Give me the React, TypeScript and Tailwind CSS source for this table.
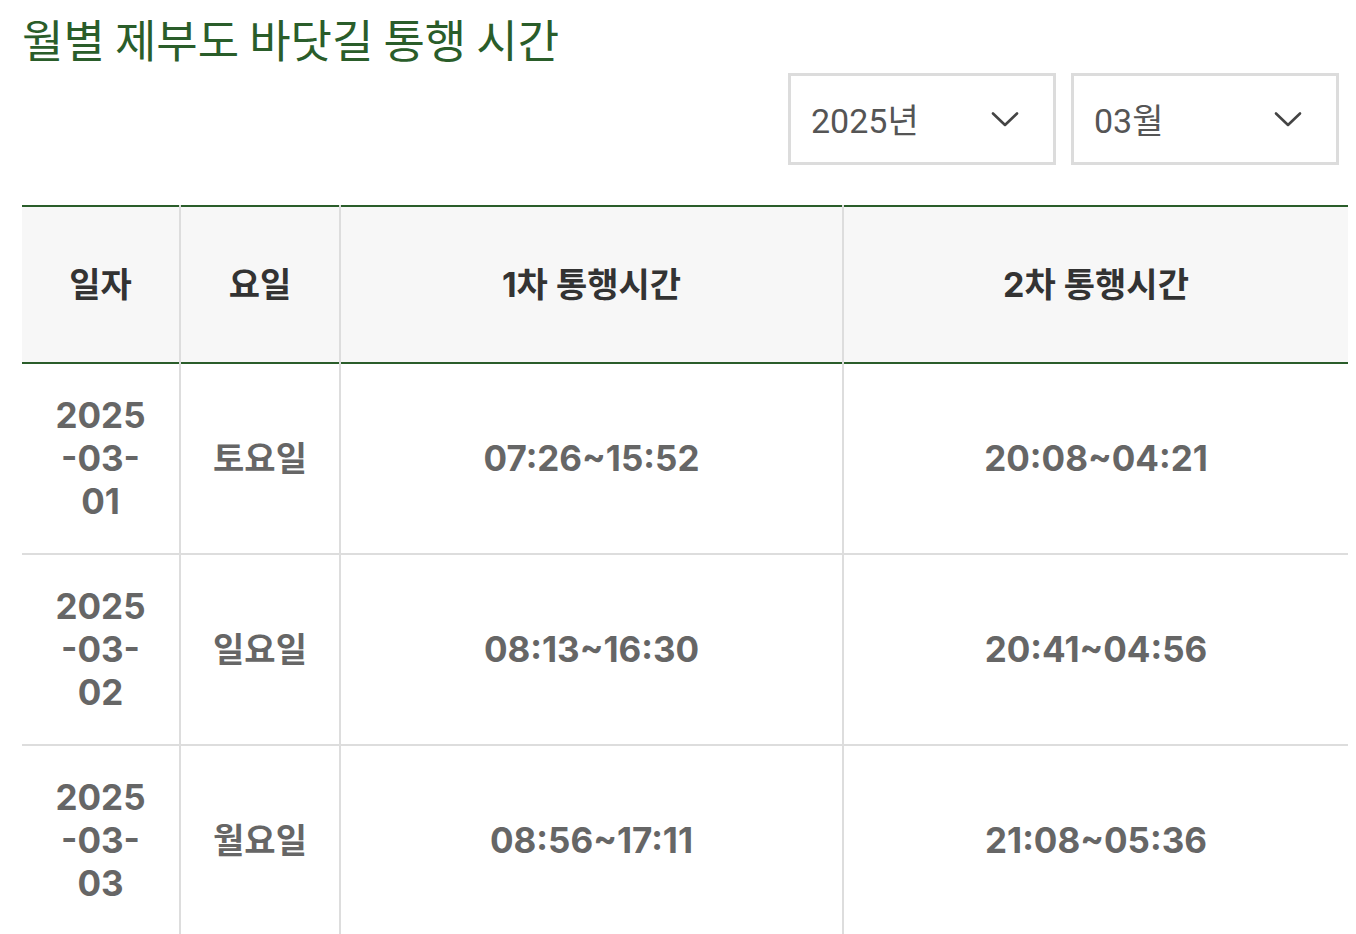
import React from "react";

interface Row {
  date: string[];
  day: string;
  first: string;
  second: string;
}

const rows: Row[] = [
  { date: ["2025", "-03-", "01"], day: "토요일", first: "07:26~15:52", second: "20:08~04:21" },
  { date: ["2025", "-03-", "02"], day: "일요일", first: "08:13~16:30", second: "20:41~04:56" },
  { date: ["2025", "-03-", "03"], day: "월요일", first: "08:56~17:11", second: "21:08~05:36" },
];

const Chevron = () => (
  <svg width="28" height="16" viewBox="0 0 28 16" fill="none">
    <path d="M2 2.5l12 11.5L26 2.5" stroke="#444" strokeWidth="2.6" strokeLinecap="round" strokeLinejoin="round" />
  </svg>
);

const Select = ({ label }: { label: string }) => (
  <div className="flex h-[92px] w-[268px] items-center justify-between border-[3px] border-[#dcdcdc] bg-white pl-[20px] pr-[34px]">
    <span className="pt-[4px] font-['Roboto','Noto_Sans_CJK_KR',sans-serif] text-[34px] text-[#555]">{label}</span>
    <Chevron />
  </div>
);

export default function App() {
  return (
    <div className="min-h-screen bg-white pl-[22px] pr-[8px] font-['Inter','Noto_Sans_CJK_KR',sans-serif]">
      <h1 className="pt-[9px] font-['Noto_Sans_CJK_KR',sans-serif] text-[45px] leading-[60px] font-normal text-[#2a5d2a]">
        월별 제부도 바닷길 통행 시간
      </h1>

      <div className="mt-[4px] mr-[9px] flex justify-end gap-[15px]">
        <Select label="2025년" />
        <Select label="03월" />
      </div>

      <table className="mt-[40px] w-full table-fixed border-collapse">
        <colgroup>
          <col className="w-[158px]" />
          <col className="w-[160px]" />
          <col className="w-[503px]" />
          <col />
        </colgroup>
        <thead>
          <tr className="h-[157px] border-y-2 border-[#2a5d2a] bg-[#f7f7f7] text-[34px] font-bold text-[#333]">
            <th className="border-r-2 border-r-[#dddddd]">일자</th>
            <th className="border-r-2 border-r-[#dddddd]">요일</th>
            <th className="border-r-2 border-r-[#dddddd]">1차 통행시간</th>
            <th>2차 통행시간</th>
          </tr>
        </thead>
        <tbody>
          {rows.map((r) => (
            <tr key={r.day} className="h-[191px] border-b-2 border-[#dddddd] text-center font-bold text-[#666]">
              <td className="border-r-2 border-r-[#dddddd] text-[35px] leading-[43px]">
                {r.date.map((d) => (
                  <div key={d}>{d}</div>
                ))}
              </td>
              <td className="border-r-2 border-r-[#dddddd] text-[34px] font-semibold">{r.day}</td>
              <td className="border-r-2 border-r-[#dddddd] text-[35px]">{r.first}</td>
              <td className="text-[35px]">{r.second}</td>
            </tr>
          ))}
        </tbody>
      </table>
    </div>
  );
}
